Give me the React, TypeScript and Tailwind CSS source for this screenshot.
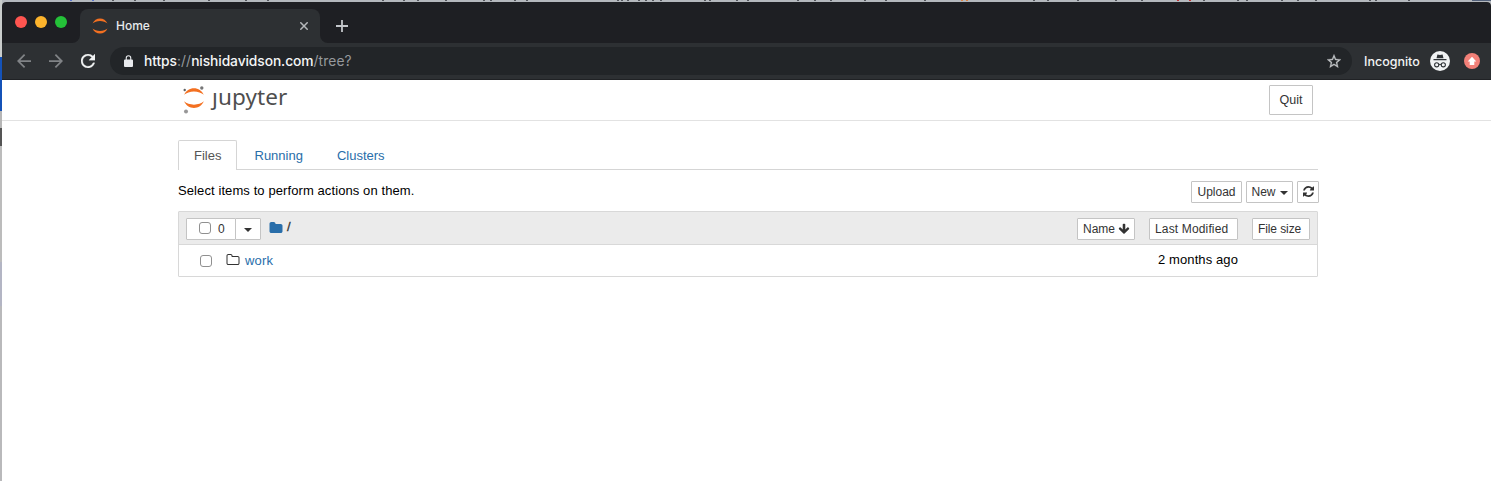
import React from "react";

const REFRESH =
  "M1511 928q0 5-1 7-64 268-268 434.5t-478 166.5q-146 0-282.5-55t-243.5-157l-129 129q-19 19-45 19t-45-19-19-45v-448q0-26 19-45t45-19h448q26 0 45 19t19 45-19 45l-137 137q71 66 161 102t187 36q134 0 250-65t186-179q11-17 53-117 8-23 30-23h192q13 0 22.5 9.5t9.5 22.5zm25-800v448q0 26-19 45t-45 19h-448q-26 0-45-19t-19-45 19-45l138-138q-148-137-349-137-134 0-250 65t-186 179q-11 17-53 117-8 23-30 23h-199q-13 0-22.5-9.5t-9.5-22.5v-7q65-268 270-434.5t480-166.5q146 0 284 55.5t245 156.5l130-129q19-19 45-19t45 19 19 45z";
const FOLDER_OPEN =
  "M1600 1312v-704q0-40-28-68t-68-28h-704q-40 0-68-28t-28-68v-64q0-40-28-68t-68-28h-320q-40 0-68 28t-28 68v960q0 40 28 68t68 28h1216q40 0 68-28t28-68zm128-704v704q0 92-66 158t-158 66h-1216q-92 0-158-66t-66-158v-960q0-92 66-158t158-66h320q92 0 158 66t66 158v32h672q92 0 158 66t66 158z";
const FOLDER =
  "M1728 608v704q0 92-66 158t-158 66h-1216q-92 0-158-66t-66-158v-960q0-92 66-158t158-66h320q92 0 158 66t66 158v32h672q92 0 158 66t66 158z";
const ARROW_DOWN =
  "M1675 832q0 53-37 90l-651 652q-39 37-91 37-53 0-90-37l-651-652q-38-36-38-90 0-53 38-91l74-75q39-37 91-37 53 0 90 37l294 294v-704q0-52 38-90t90-38h128q52 0 90 38t38 90v704l294-294q37-37 90-37 52 0 91 37l75 75q37 39 37 91z";

function Glyph({ d, box = "0 0 1792 1792", className }: { d: string; box?: string; className: string }) {
  return (
    <svg viewBox={box} className={className} fill="currentColor">
      <path d={d} />
    </svg>
  );
}

function Arcs() {
  return (
    <g fill="#f37021">
      <path d="M.8 9.800C2.800 5 7.200 2.200 12 2.200s9.200 2.800 11.200 7.600C20.500 7.400 16.500 6 12 6S3.500 7.400.8 9.800z" />
      <path d="M.8 17.200c2 4.800 6.400 7.600 11.200 7.600s9.200-2.800 11.200-7.600c-2.700 2.400-6.700 3.800-11.200 3.800S3.500 19.600.8 17.200z" />
    </g>
  );
}

function Caret({ className = "" }: { className?: string }) {
  return (
    <svg viewBox="0 0 8 4" className={`h-1 w-2 ${className}`} fill="currentColor">
      <path d="M0 0h8L4 4z" />
    </svg>
  );
}

function Check({ className = "" }: { className?: string }) {
  return <span className={`block h-3 w-3 shrink-0 rounded-[3px] border border-[#909090] bg-white ${className}`} />;
}

function Button({ className, children }: { className: string; children: React.ReactNode }) {
  return (
    <button className={`flex h-[22px] shrink-0 items-center whitespace-nowrap rounded-[1px] border border-[#c4c4c4] bg-white text-[12px] leading-[18px] text-[#333] ${className}`}>
      {children}
    </button>
  );
}

function TabStrip() {
  return (
    <div className="flex h-[41px] items-end bg-[#1e1f23]">
      <div className="flex h-full w-[78px] gap-2 pl-[13px] pt-[14px]">
        <i className="h-3 w-3 rounded-full bg-[#ff5550]" />
        <i className="h-3 w-3 rounded-full bg-[#fdb42c]" />
        <i className="h-3 w-3 rounded-full bg-[#24c138]" />
      </div>
      <div className="relative flex h-[34px] w-[240px] items-center rounded-t-lg bg-[#2d3033] pl-3">
        <svg className="absolute -left-2 bottom-0 h-2 w-2" viewBox="0 0 8 8">
          <path d="M8 0v8H0a8 8 0 0 0 8-8z" fill="#2d3033" />
        </svg>
        <svg className="absolute -right-2 bottom-0 h-2 w-2" viewBox="0 0 8 8">
          <path d="M0 0v8h8a8 8 0 0 1-8-8z" fill="#2d3033" />
        </svg>
        <svg className="h-4 w-4" viewBox="0 1.500 24 24">
          <Arcs />
        </svg>
        <span className="ml-2 font-['Inter'] text-[12px] font-medium leading-4 text-[#e8eaec]">Home</span>
        <svg className="ml-auto mr-3 h-2 w-2" viewBox="0 0 8 8" stroke="#b5b8bb" strokeWidth="1.500">
          <path d="M.3.3l7.400 7.400M7.700.3L.3 7.700" />
        </svg>
      </div>
      <svg className="mb-[11px] ml-4 h-3 w-3" viewBox="0 0 12 12" stroke="#c3c6ca" strokeWidth="1.800">
        <path d="M6 0v12M0 6h12" />
      </svg>
    </div>
  );
}

function Toolbar() {
  return (
    <div className="flex h-[37px] items-center border-b border-[#202225] bg-[#2d3033] font-['Inter']">
      <svg className="ml-[15px] h-[14px] w-[14px]" viewBox="4 4 16 16" fill="#808386">
        <path d="M20 11H7.830l5.590-5.590L12 4l-8 8 8 8 1.410-1.410L7.830 13H20v-2z" />
      </svg>
      <svg className="ml-[18px] h-[14px] w-[14px]" viewBox="4 4 16 16" fill="#808386">
        <path d="M12 4l-1.410 1.410L16.170 11H4v2h12.170l-5.580 5.590L12 20l8-8z" />
      </svg>
      <svg className="ml-[18px] h-[14px] w-[14px]" viewBox="4 4 16 16" fill="#f1f3f4" stroke="#f1f3f4" strokeWidth=".3">
        <path d="M17.650 6.350C16.200 4.900 14.210 4 12 4c-4.420 0-7.990 3.580-7.990 8s3.570 8 7.990 8c3.730 0 6.840-2.550 7.730-6h-2.080c-.820 2.330-3.040 4-5.650 4-3.310 0-6-2.690-6-6s2.690-6 6-6c1.660 0 3.140.690 4.220 1.780L13 11h7V4l-2.350 2.350z" />
      </svg>
      <div className="ml-[15px] flex h-7 w-[1242px] items-center rounded-full bg-[#222528]">
        <svg className="mb-px ml-[13.500px] h-[12px] w-[9px]" viewBox="0 0 9 12" fill="#e8eaed">
          <path d="M1 4.500h.7V3a2.800 2.800 0 0 1 5.600 0v1.500H8a1 1 0 0 1 1 1V11a1 1 0 0 1-1 1H1a1 1 0 0 1-1-1V5.500a1 1 0 0 1 1-1zm1.800 0h3.400V3a1.700 1.700 0 0 0-3.400 0z" />
        </svg>
        <span className="ml-[11.500px] whitespace-nowrap text-[13.800px] leading-5 tracking-[0.1px] text-[#96999d]">
          <span className="font-medium tracking-[-0.07px] text-[#f4f5f6]">https</span>://<span className="font-medium tracking-[-0.09px] text-[#f4f5f6]">nishidavidson.com</span>/tree?
        </span>
        <svg className="ml-auto mr-[11px] h-[14px] w-[14px]" viewBox="2 2 20 19" fill="#c0c3c6" stroke="#c0c3c6" strokeWidth=".4">
          <path d="M22 9.240l-7.190-.620L12 2 9.190 8.630 2 9.240l5.460 4.730L5.820 21 12 17.270 18.180 21l-1.630-7.030L22 9.240zM12 15.400l-3.760 2.270 1-4.280-3.320-2.880 4.380-.380L12 6.100l1.710 4.040 4.380.380-3.320 2.880 1 4.280L12 15.400z" />
        </svg>
      </div>
      <span className="ml-3 mt-px w-[66px] whitespace-nowrap text-[12.500px] font-medium leading-5 text-[#f1f3f4]">Incognito</span>
      <svg className="h-5 w-5" viewBox="0 0 20 20">
        <circle cx="10" cy="10" r="10" fill="#f1f3f4" />
        <path d="M7.400 3.500l2.600.6 2.600-.6.9 3.700h-7zM3.500 8h13v1.200h-13z" fill="#303438" />
        <g fill="none" stroke="#303438" strokeWidth="1.100">
          <circle cx="6.700" cy="13.800" r="2.100" />
          <circle cx="13.300" cy="13.800" r="2.100" />
          <path d="M8.800 13.600q1.200-.8 2.400 0" />
        </g>
      </svg>
      <svg className="ml-[14px] h-4 w-4" viewBox="0 0 16 16">
        <circle cx="8" cy="8" r="8" fill="#f28078" />
        <path d="M8 3.800L12.300 8.500H10.300V12H5.700V8.500H3.700z" fill="#fff" />
      </svg>
    </div>
  );
}

function Header() {
  return (
    <header className="flex h-[41px] border-b border-[#e2e2e2] pl-[180px] pr-[178px]">
      <svg className="mt-[5px] h-[29px] w-[24px] shrink-0" viewBox="0 0 24 29">
        <g transform="translate(1.400 1.200) scale(.88)">
          <Arcs />
        </g>
        <circle cx="2.700" cy="5" r="1.200" fill="#616262" />
        <circle cx="19.800" cy="3" r="1.700" fill="#767677" />
        <circle cx="4" cy="26.600" r="2" fill="#989798" />
      </svg>
      <span className="ml-[6px] mt-px font-['Noto_Sans'] text-[22.500px] leading-[32px] tracking-[0.1px] text-[#4e4e4e]">ȷupyter</span>
      <button className="ml-auto mt-[5px] h-[30px] w-[44px] rounded-[1px] border border-[#c4c4c4] text-[12.500px] text-[#333]">Quit</button>
    </header>
  );
}

function Files() {
  return (
    <main className="ml-[176px] w-[1140px] pt-[19px] text-[13px] leading-[18px] text-black">
      <nav className="flex h-[30px] border-b border-[#d5d5d5] text-[#296eaa]">
        <span className="-mb-px h-[30px] w-[59px] rounded-t-[2px] border border-b-0 border-[#d5d5d5] bg-white pl-[15px] pt-[6px] text-[#555]">Files</span>
        <span className="pl-[17.500px] pt-[7px]">Running</span>
        <span className="pl-[34px] pt-[7px]">Clusters</span>
      </nav>
      <div className="mr-[-1px] flex h-[41px] pt-[11px]">
        <span className="mt-px tracking-[0.095px]">Select items to perform actions on them.</span>
        <Button className="ml-auto w-[51px] justify-center">Upload</Button>
        <Button className="ml-1 w-[47px] justify-center">New<Caret className="ml-1 mt-px" /></Button>
        <Button className="ml-1 w-[22px] justify-center">
          <Glyph d={REFRESH} box="0 0 1536 1536" className="mb-px h-[11px] w-[11px]" />
        </Button>
      </div>
      <section className="h-[66px] rounded-[1px] border border-[#d8d8d8]">
        <div className="flex h-[33px] items-center border-b border-[#d8d8d8] bg-[#ebebeb] px-[7px] pt-[2px]">
          <Button className="w-[50px] pl-3">
            <Check className="mb-[3px]" />
            <span className="ml-[7px]">0</span>
          </Button>
          <Button className="-ml-px w-[26px] justify-center"><Caret className="mt-px" /></Button>
          <Glyph d={FOLDER} className="mb-[3px] ml-2 h-[14px] w-[14px] text-[#296eaa]" />
          <span className="mb-1 ml-1 text-[13px] text-[#333] [-webkit-text-stroke:0.3px_#333]">/</span>
          <Button className="ml-auto w-[58px] pl-[5px]">
            Name<Glyph d={ARROW_DOWN} className="ml-[3px] h-3 w-3" />
          </Button>
          <Button className="ml-[14px] w-[89px] pl-[5px] tracking-[0.15px]">Last Modified</Button>
          <Button className="ml-[14px] w-[58px] pl-[5px] tracking-[-0.1px]">File size</Button>
        </div>
        <div className="flex h-[31px] items-center pl-[21px] pr-[79px]">
          <Check className="mt-px" />
          <Glyph d={FOLDER_OPEN} className="mb-px ml-[13.500px] h-[14px] w-[14px] text-[#333]" />
          <span className="ml-[5.500px] tracking-[0.2px] text-[#296eaa]">work</span>
          <span className="mb-[2px] ml-auto tracking-[0.1px]">2 months ago</span>
        </div>
      </section>
    </main>
  );
}

/* Slivers of the desktop that stay visible left of the browser window. */
function Edge() {
  return (
    <div className="flex h-[481px] w-[2px] shrink-0 flex-col bg-[#b9b9bb]">
      <i className="h-[57px] bg-[#c9cccb]" />
      <i className="h-[54px] bg-[#1452b8]" />
      <i className="h-[17px] bg-[#b6b6b6]" />
      <i className="h-[18px] bg-[#555]" />
      <i className="h-[116px] bg-[#bcbcbc]" />
      <i className="h-[44px] bg-[#b3b5c4]" />
    </div>
  );
}

const MARKS = [70, 92, 112, 134, 163, 208, 245, 267, 382, 403, 417, 445, 483, 490, 514, 526, 617, 621, 627, 638, 645, 652, 660, 704, 709, 736, 747, 797, 814, 830, 864, 885, 924, 961, 966, 1033, 1047, 1077, 1115, 1141, 1177, 1189, 1203, 1237, 1246, 1281, 1297, 1315, 1369, 1375, 1408];
const tint = (x: number) => (x === 961 || x === 966 ? "#dc8240" : x === 1177 || x === 1189 ? "#bd3434" : x < 100 ? "#5873c9" : "#53565c");

export default function App() {
  return (
    <div className="flex h-[481px] w-[1491px] overflow-hidden bg-white font-['Liberation_Sans',sans-serif]">
      <Edge />
      <div className="min-w-0 flex-1 bg-[#b4b8bd]">
        <svg className="block h-[2px] w-[1489px]" viewBox="2 0 1489 2">
          <rect x="2" width="1489" height="2" fill="#b4b8bd" />
          {MARKS.map((x) => (
            <rect key={x} x={x} width="2" height="1" fill={tint(x)} />
          ))}
          <rect x="1472" width="19" height="1" fill="#526079" />
        </svg>
        <div className="h-[479px] overflow-hidden rounded-t-[4px] bg-white">
          <TabStrip />
          <Toolbar />
          <Header />
          <Files />
        </div>
      </div>
    </div>
  );
}
